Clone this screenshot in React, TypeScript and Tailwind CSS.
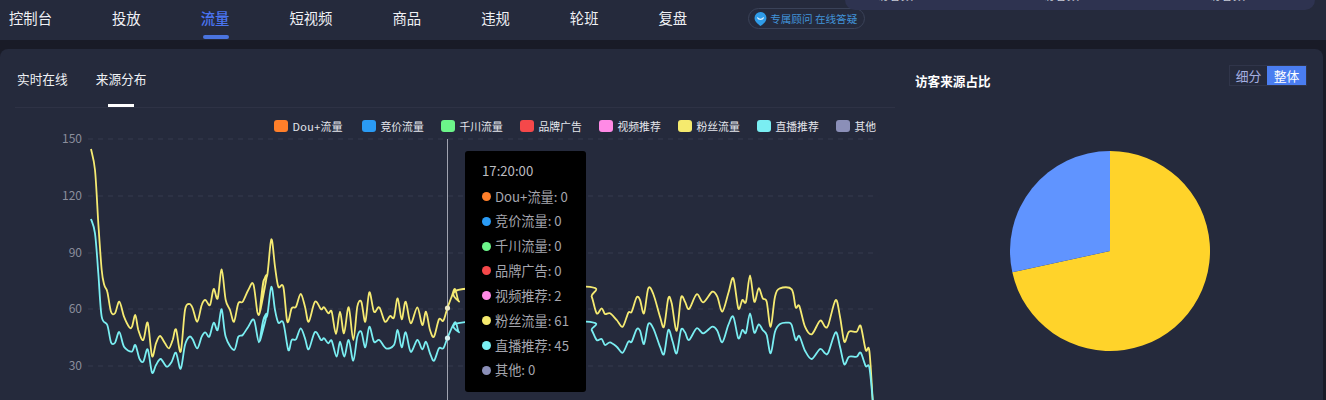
const nav = ['控制台', '投放', '流量', '短视频', '商品', '违规', '轮班', '复盘'];
const legend = [
  ['Dou+流量', 'bg-[#ff7f2a]', 'w-[88px] tracking-[0.4px]'],
  ['竞价流量', 'bg-[#2a9bf5]', 'w-[79px]'],
  ['千川流量', 'bg-[#6cf58a]', 'w-[79px]'],
  ['品牌广告', 'bg-[#f5484a]', 'w-[79px]'],
  ['视频推荐', 'bg-[#ff8ae6]', 'w-[79px]'],
  ['粉丝流量', 'bg-[#f5ea6e]', 'w-[79px]'],
  ['直播推荐', 'bg-[#7aeef2]', 'w-[79px]'],
  ['其他', 'bg-[#8b8fb8]', 'w-[40px]'],
];
const tips = [
  ['Dou+流量: 0', 'bg-[#ff7f2a]'],
  ['竞价流量: 0', 'bg-[#2a9bf5]'],
  ['千川流量: 0', 'bg-[#6cf58a]'],
  ['品牌广告: 0', 'bg-[#f5484a]'],
  ['视频推荐: 2', 'bg-[#ff8ae6]'],
  ['粉丝流量: 61', 'bg-[#f5ea6e]'],
  ['直播推荐: 45', 'bg-[#7aeef2]'],
  ['其他: 0', 'bg-[#8b8fb8]'],
];
type P = [number, number];
const z = (pts: number[][], ox: number, oy: number): P[] => pts.map(([x, y]) => [x / 3 + ox, y / 3 + oy] as P);

const yellow: P[] = [
  ...z([[123,57],[135,120],[145,280],[155,420],[163,465],[172,485],[183,545],[195,550],[208,515],[222,560],[238,592],[246,590],[256,555],[265,600],[280,630],[293,578],[306,678],[318,640],[330,618],[345,640],[357,655],[368,630],[378,598],[392,665],[405,540],[418,522],[428,535],[442,575],[455,525],[466,510],[480,525],[491,477],[503,505],[515,418],[527,510],[540,540],[552,575],[565,520],[578,515],[595,480],[610,462],[622,545],[630,545],[640,460],[650,440]], 50, 130),
  ...z([[0,545],[10,455],[22,435],[34,328],[45,410],[55,470],[70,470],[82,575],[95,535],[108,530],[122,492],[135,530],[146,575],[165,515],[183,538],[192,532],[205,550],[215,545],[228,612],[240,545],[252,610],[266,532],[280,630],[292,530],[304,515],[316,575],[328,487],[342,545],[358,532],[375,575],[390,558],[402,562],[413,505],[425,568],[437,515],[452,580],[472,532],[487,585],[498,545],[510,600],[522,620],[537,568],[550,572],[562,535],[575,500],[585,477],[597,515],[610,477]], 260, 130),
  ...z([[438,440],[455,470],[470,520],[485,505],[495,522],[510,520],[530,540],[548,560],[565,518],[575,515],[590,472],[600,480],[612,520],[625,445],[640,462]], 440, 140),
  ...z([[0,350],[12,380],[25,295],[35,310],[50,392],[63,293],[75,305],[87,327],[110,283],[130,307],[157,275],[172,290],[187,335],[205,280],[220,235],[235,325],[247,300],[258,305],[270,226],[283,305],[296,265],[308,295],[320,305],[332,380],[345,290],[360,265],[395,268],[407,322],[418,318],[435,380],[455,403],[480,362],[495,380],[505,375],[527,300],[540,350],[553,425],[567,395],[590,395],[602,378],[617,450],[628,452],[638,600],[640,640]], 660, 200),
];
const cyan: P[] = [
  ...z([[123,267],[135,310],[145,430],[155,560],[172,585],[183,637],[195,638],[208,606],[222,650],[245,665],[256,645],[268,685],[280,695],[293,658],[306,728],[318,705],[332,687],[350,710],[365,695],[378,668],[392,716],[405,645],[418,620],[428,628],[442,655],[455,620],[466,607],[478,620],[491,578],[503,600],[515,538],[527,620],[552,660],[565,620],[578,615],[595,590],[612,570],[627,637],[640,570],[650,555]], 50, 130),
  ...z([[0,632],[10,570],[22,555],[34,470],[45,540],[55,578],[70,578],[85,660],[95,630],[108,628],[122,595],[135,625],[146,658],[165,606],[183,630],[192,625],[205,640],[215,632],[230,680],[240,635],[253,680],[266,630],[280,692],[292,620],[304,605],[316,652],[328,590],[342,635],[358,630],[378,655],[402,645],[413,600],[425,652],[437,607],[452,665],[472,630],[487,658],[498,635],[510,670],[522,692],[537,655],[550,655],[562,625],[585,577],[597,607],[610,577]], 260, 130),
  ...z([[438,545],[455,570],[470,600],[485,597],[495,615],[510,607],[530,620],[548,638],[565,605],[575,605],[590,568],[600,572],[612,612],[625,552],[640,565]], 440, 140),
  ...z([[0,440],[12,462],[25,390],[38,425],[50,460],[63,390],[75,397],[87,420],[110,385],[130,400],[157,380],[172,392],[187,427],[205,375],[220,350],[235,415],[247,390],[258,398],[270,340],[283,398],[296,373],[308,390],[320,405],[332,460],[345,395],[360,372],[385,368],[395,375],[407,420],[418,408],[435,452],[455,477],[480,447],[495,460],[505,458],[527,397],[540,440],[553,493],[567,470],[590,470],[602,458],[617,498],[628,502],[638,600],[640,640]], 660, 200),
];

function smooth(p: P[]): string {
  let d = `M${p[0][0].toFixed(1)} ${p[0][1].toFixed(1)}`;
  const t = 0.16;
  for (let i = 0; i < p.length - 1; i++) {
    const a = p[Math.max(0, i - 1)], b = p[i], c = p[i + 1], e = p[Math.min(p.length - 1, i + 2)];
    d += `C${(b[0] + (c[0] - a[0]) * t).toFixed(1)} ${(b[1] + (c[1] - a[1]) * t).toFixed(1)} ${(c[0] - (e[0] - b[0]) * t).toFixed(1)} ${(c[1] - (e[1] - b[1]) * t).toFixed(1)} ${c[0].toFixed(1)} ${c[1].toFixed(1)}`;
  }
  return d;
}

const grid: [number, string][] = [[139, '150'], [196, '120'], [253, '90'], [309, '60'], [366, '30']];

export default function App() {
  return (
    <div className="relative flex h-[400px] w-[1326px] flex-col overflow-hidden bg-[#191b27] font-['Noto_Sans_CJK_SC','Noto_Sans',sans-serif] text-white">
      <header className="flex h-[40px] shrink-0 items-start bg-[#252a3c] pl-[9px]">
        <nav className="flex gap-[60px]">
          {nav.map((n) => (
            <div key={n} className={`relative h-[40px] pt-[7px] text-[14.35px] leading-[21px] ${n === '流量' ? 'font-medium text-[#4a74f0]' : 'text-[#f0f1f5]'}`}>
              {n}
              {n === '流量' && <span className="absolute right-0 bottom-[1px] h-[4px] w-[26px] rounded-sm bg-[#4a74e0]" />}
            </div>
          ))}
        </nav>
        <div className="mt-[8px] ml-[61px] flex h-[21px] w-[117px] items-center rounded-full border border-[#3a4258] pl-[4px] text-[10.6px] text-[#4193d8]">
          <svg width="15" height="16" viewBox="0 0 14 15" className="mr-[2px] shrink-0">
            <path d="M7 1a5.6 5.6 0 0 1 5.6 5.6c0 3.4-3 5.6-5.6 7.4C4.4 12.2 1.4 10 1.4 6.6A5.6 5.6 0 0 1 7 1z" fill="#2f9ce8" />
            <path d="M4.3 6.4c.7 1.9 4.7 1.9 5.4 0" fill="none" stroke="#dff1ff" strokeWidth="1.1" strokeLinecap="round" />
          </svg>
          专属顾问 在线答疑
        </div>
      </header>

      <div className="absolute top-0 right-[11px] flex h-[10px] w-[470px] justify-between overflow-hidden rounded-b-[10px] bg-[#2e3350] pr-[70px] pl-[32px] text-[12px] leading-[12px] text-[#c8cbd8]">
        <span className="-mt-[11px]">访客数</span>
        <span className="-mt-[11px]">访客数</span>
        <span className="-mt-[11px]">访客数</span>
      </div>

      <main className="mt-[9px] mr-[3px] flex min-h-0 flex-1 rounded-t-[8px] bg-[#252a3c]">
        <section className="ml-[15px] flex w-[880px] shrink-0 flex-col">
          <div className="flex h-[58.5px] shrink-0 items-start gap-[28px] border-b border-[#2e3245] pl-[2px] pt-[20px] text-[12.7px] leading-[20px] text-[#eef0f4]">
            <div>实时在线</div>
            <div className="relative h-[38px]">
              来源分布
              <span className="absolute bottom-0 left-[12px] h-[3px] w-[26px] bg-white" />
            </div>
          </div>
          <div className="flex h-[30px] shrink-0 items-start pl-[259px] pt-[11px]">
            {legend.map(([t, c, w]) => (
              <div key={t} className={`flex items-center gap-[4.5px] whitespace-nowrap text-[10.8px] leading-[14px] text-[#e4e6ec] ${w}`}>
                <span className={`h-[12px] w-[14px] shrink-0 rounded-[3px] ${c}`} />
                {t}
              </div>
            ))}
          </div>
          <div className="relative min-h-0 flex-1">
            <svg width="880" height="262" viewBox="15 138 880 262" className="block overflow-visible">
              {grid.map(([y, l]) => (
                <g key={l}>
                  <line x1="88" x2="875" y1={y} y2={y} stroke="#363b4e" strokeWidth="1" strokeDasharray="5 5" />
                  <text x="82" y={y + 4} textAnchor="end" fontSize="12" fill="#8b8e9c">{l}</text>
                </g>
              ))}
              <line x1="447.5" x2="447.5" y1="139" y2="400" stroke="#a0a3b0" strokeWidth="1" />
              <path d={smooth(yellow)} fill="none" stroke="#f5ea72" strokeWidth="1.8" />
              <path d={smooth(cyan)} fill="none" stroke="#7aeef2" strokeWidth="1.8" />
              <circle cx="447.5" cy="308" r="2.6" fill="#ece9c8" />
              <circle cx="447.5" cy="338" r="2.6" fill="#d8f2f2" />
            </svg>
            <div className="absolute top-[13px] left-[450px] h-[241px] w-[121px] rounded-[3px] bg-black pt-[10px] pl-[17px] text-[13.2px] text-[#a5a6ae]">
              <div className="h-[20px] leading-[20px] text-[#bcbcc0]">17:20:00</div>
              <div className="mt-[3.5px] flex flex-col">
                {tips.map(([t, c]) => (
                  <div key={t} className="flex h-[24.85px] items-center gap-[4px] whitespace-nowrap">
                    <span className={`h-[9px] w-[9px] shrink-0 rounded-full ${c}`} />
                    {t}
                  </div>
                ))}
              </div>
            </div>
          </div>
        </section>
        <section className="flex flex-1 flex-col pl-[20px]">
          <div className="flex items-start justify-between pr-[16px] pt-[16px]">
            <h2 className="mt-[6px] text-[12.6px] leading-[20px] font-bold text-white">访客来源占比</h2>
            <div className="flex h-[21px] w-[78px] border border-[#30354a] text-[12.8px] leading-[20px]">
              <span className="flex-1 text-center text-[#a4aee0]">细分</span>
              <span className="w-[39px] bg-[#4a7df0] text-center text-white">整体</span>
            </div>
          </div>
          <svg width="200" height="200" viewBox="0 0 200 200" className="mt-[60px] ml-[95px] block">
            <path d="M100 100L100 0A100 100 0 1 1 2.3 121.3Z" fill="#ffd32a" />
            <path d="M100 100L2.3 121.3A100 100 0 0 1 100 0Z" fill="#6094ff" />
          </svg>
        </section>
      </main>
    </div>
  );
}
